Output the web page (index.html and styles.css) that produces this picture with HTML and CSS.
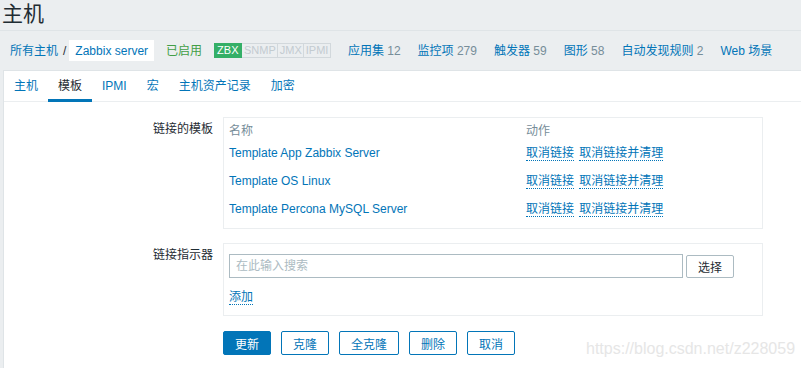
FILE: index.html
```html
<html>
    <head>
        <link rel="stylesheet" href="styles.css">
    </head>
    <body>
        <header class="pageHeader">
            <h1>主机</h1>
        </header>
        <div class="hostNav">
            <ul class="breadcrumbs">
                <li><a href="#">所有主机</a></li>
                <li class="sep">/</li>
                <li class="current"><a href="#">Zabbix server</a></li>
            </ul>
            <span class="enabled">已启用</span>
            <span class="statusGroup">
                <span class="status on">ZBX</span><span class="status">SNMP</span><span class="status">JMX</span><span class="status">IPMI</span>
            </span>
            <a class="navItem" href="#">应用集 <span class="count">12</span></a>
            <a class="navItem" href="#">监控项 <span class="count">279</span></a>
            <a class="navItem" href="#">触发器 <span class="count">59</span></a>
            <a class="navItem" href="#">图形 <span class="count">58</span></a>
            <a class="navItem" href="#">自动发现规则 <span class="count">2</span></a>
            <a class="navItem" href="#">Web 场景</a>
        </div>
        <div class="panel">
            <ul class="tabs">
                <li><a href="#">主机</a></li>
                <li class="active"><a href="#">模板</a></li>
                <li><a href="#">IPMI</a></li>
                <li><a href="#">宏</a></li>
                <li><a href="#">主机资产记录</a></li>
                <li><a href="#">加密</a></li>
            </ul>
            <form class="form">
                <div class="formRow">
                    <label>链接的模板</label>
                    <div class="formBox tableBox">
                        <table class="linked">
                            <tr class="head">
                                <th class="nameCol">名称</th>
                                <th>动作</th>
                            </tr>
                            <tr>
                                <td><a href="#">Template App Zabbix Server</a></td>
                                <td><a class="action" href="#">取消链接</a> <a class="action" href="#">取消链接并清理</a></td>
                            </tr>
                            <tr>
                                <td><a href="#">Template OS Linux</a></td>
                                <td><a class="action" href="#">取消链接</a> <a class="action" href="#">取消链接并清理</a></td>
                            </tr>
                            <tr>
                                <td><a href="#">Template Percona MySQL Server</a></td>
                                <td><a class="action" href="#">取消链接</a> <a class="action" href="#">取消链接并清理</a></td>
                            </tr>
                        </table>
                    </div>
                </div>
                <div class="formRow">
                    <label>链接指示器</label>
                    <div class="formBox searchBox">
                        <div class="searchLine">
                            <input type="text" placeholder="在此输入搜索">
                            <button type="button" class="btnGrey">选择</button>
                        </div>
                        <a class="action addLink" href="#">添加</a>
                    </div>
                </div>
                <div class="formRow">
                    <span></span>
                    <div class="buttons">
                        <button type="button" class="btn main">更新</button>
                        <button type="button" class="btn">克隆</button>
                        <button type="button" class="btn">全克隆</button>
                        <button type="button" class="btn">删除</button>
                        <button type="button" class="btn">取消</button>
                    </div>
                </div>
            </form>
            <div class="watermark">https://blog.csdn.net/z228059</div>
        </div>
    </body>
</html>
```

FILE: styles.css
```css
body {
    margin: 0;
    background-color: #ebeef0;
    color: #1f2c33;
    font-family: "Liberation Sans", "Noto Sans CJK SC", sans-serif;
    font-size: 12px;
    line-height: 14px;
    overflow: hidden;
}
a {
    color: #0275b8;
    text-decoration: none;
}
ul {
    list-style: none;
    margin: 0;
    padding: 0;
}
table {
    font-size: inherit;
    line-height: inherit;
}

/* page title */
.pageHeader {
    height: 30px;
    border-bottom: 1px solid #dfe4e7;
    padding-left: 2px;
}
.pageHeader h1 {
    margin: 0;
    font-size: 21px;
    font-weight: normal;
    line-height: 28px;
}

/* host navigation */
.hostNav {
    display: flex;
    align-items: center;
    height: 39px;
    padding-left: 10px;
    white-space: nowrap;
}
.breadcrumbs {
    display: flex;
    align-items: center;
}
.breadcrumbs .sep {
    margin: 0 3px 0 5px;
}
.breadcrumbs .current {
    background-color: white;
    padding: 4px 6px 3px 6px;
}
.enabled {
    color: #429e47;
    margin-left: 12px;
}
.statusGroup {
    display: flex;
    margin-left: 12px;
    margin-right: 17px;
}
.status {
    font-size: 11px;
    line-height: 13px;
    padding: 0 1.5px;
    color: #c3cbd0;
    border: 1px solid #d2d8dc;
    border-left: none;
}
.status.on {
    background-color: #34af67;
    border-color: #34af67;
    color: white;
    padding: 0 3px;
}
.navItem {
    margin-right: 17px;
}
.count {
    color: #768d99;
}

/* main panel */
.panel {
    position: relative;
    margin-left: 3px;
    height: 297px;
    background-color: white;
    border-top: 1px solid #dfe4e7;
    border-left: 1px solid #dfe4e7;
}
.tabs {
    display: flex;
    border-bottom: 1px solid #ebeef0;
}
.tabs li {
    box-sizing: border-box;
    height: 30px;
    padding: 8px 10px 0;
}
.tabs li.active {
    height: 31px;
    margin-bottom: -1px;
    border-bottom: 3px solid #0275b8;
}
.tabs li.active a {
    color: #1f2c33;
}

/* form */
.form {
    margin: 0;
    padding-top: 15px;
}
.formRow {
    display: grid;
    grid-template-columns: 209px 540px;
    column-gap: 10px;
    margin-bottom: 14px;
}
.formRow label {
    text-align: right;
    padding-top: 5px;
}
.formBox {
    box-sizing: border-box;
    border: 1px solid #ebeef0;
}
.tableBox {
    padding: 5px;
}
.linked {
    width: 100%;
    border-collapse: collapse;
}
.linked th {
    text-align: left;
    font-weight: normal;
    color: #768d99;
    height: 16px;
    padding: 0;
    vertical-align: middle;
}
.linked .nameCol {
    width: 297px;
}
.linked td {
    height: 28px;
    padding: 0;
    vertical-align: middle;
}
.action {
    border-bottom: 1px dotted #0275b8;
    margin-right: 2px;
}
.searchBox {
    padding: 10px 5px;
}
.searchLine {
    display: flex;
    align-items: center;
}
.searchLine input {
    box-sizing: border-box;
    width: 454px;
    height: 24px;
    margin: 0;
    padding: 0 6px;
    border: 1px solid #acbbc2;
    font-family: inherit;
    font-size: 12px;
    color: #1f2c33;
}
.searchLine input::placeholder {
    color: #acbbc2;
}
.btnGrey {
    box-sizing: border-box;
    height: 23px;
    width: 48px;
    margin-left: 3px;
    padding: 0;
    background-color: white;
    border: 1px solid #acbbc2;
    border-radius: 2px;
    color: #1f2c33;
    font-family: inherit;
    font-size: 12px;
}
.addLink {
    display: inline-block;
    margin-top: 12px;
    line-height: 14px;
}
.buttons {
    display: flex;
    gap: 10px;
    margin-top: 1px;
}
.btn {
    box-sizing: border-box;
    height: 24px;
    padding: 0 11px;
    background-color: white;
    border: 1px solid #0275b8;
    border-radius: 2px;
    color: #0275b8;
    font-family: inherit;
    font-size: 12px;
}
.btn.main {
    background-color: #0275b8;
    color: white;
}
.watermark {
    position: absolute;
    left: 582px;
    top: 268px;
    font-size: 16px;
    line-height: 20px;
    color: #e6e6e6;
}
```
